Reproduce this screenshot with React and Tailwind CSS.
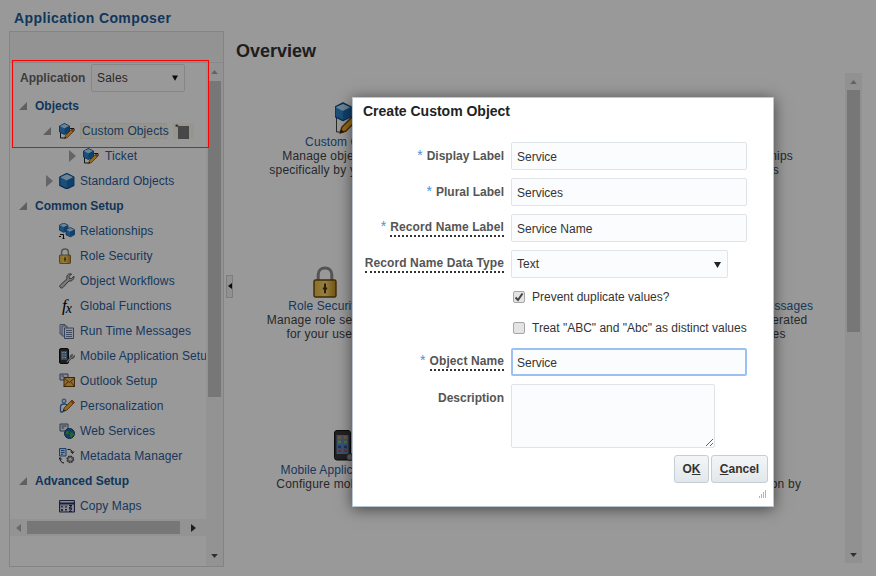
import React from 'react';

const Cube = ({ x = 0, y = 0, s = 1 }) => (
  <g transform={`translate(${x} ${y}) scale(${s})`}>
    <polygon points="5,0 10,2.5 10,8.5 5,11 0,8.5 0,2.5" fill="#2f86cc" stroke="#0b4f91" strokeWidth="0.9" strokeLinejoin="round" />
    <polygon points="5,0.6 9.6,2.6 5,5 0.4,2.6" fill="#b5dcf5" />
    <polygon points="5,5 9.6,2.6 9.6,8.2 5,10.5" fill="#1a6db5" />
  </g>
);

const Pencil = ({ x = 0, y = 0, s = 1 }) => (
  <g transform={`translate(${x} ${y}) scale(${s})`}>
    <polygon points="0,10 1,7 7.5,0.5 9.5,2.5 3,9" fill="#f0b429" stroke="#7a3f08" strokeWidth="0.7" strokeLinejoin="round" />
    <polygon points="7.5,0.5 9.5,2.5 8.3,3.7 6.3,1.7" fill="#d9541e" />
    <polygon points="0,10 0.6,8.2 1.8,9.4" fill="#222222" />
  </g>
);

const CubeEdit = () => (
  <svg width="16" height="16" viewBox="0 0 16 16">
    <path d="M1.500 9V15H5.500M11 5.500H15V8" fill="none" stroke="#222222" strokeWidth="1" />
    <Cube x={0.5} y={0.5} s={1} />
    <Pencil x={5.500} y={5.500} />
  </svg>
);

const StandardCube = () => (
  <svg width="16" height="16" viewBox="0 0 16 16">
    <Cube x={0.8} y={0.5} s={1.4} />
  </svg>
);

const Relationships = () => (
  <svg width="16" height="16" viewBox="0 0 16 16">
    <Cube x={0.5} y={0} s={0.85} />
    <Cube x={7} y={4.5} s={0.85} />
    <path d="M1 11.500H4.500V15M0 13.500H2M3.500 15.500H5.500" fill="none" stroke="#111111" strokeWidth="1" />
  </svg>
);

const LockIcon = ({ w = 12, h = 16 }) => (
  <svg width={w} height={h} viewBox="0 0 12 16">
    <defs>
      <linearGradient id="lockbody" x1="0" y1="0" x2="1" y2="0">
        <stop offset="0" stopColor="#e7b83a" />
        <stop offset="0.5" stopColor="#f8d873" />
        <stop offset="1" stopColor="#c08a1c" />
      </linearGradient>
    </defs>
    <path d="M2.600 7.500V4.400C2.600 2.300 4 1 6 1s3.400 1.300 3.400 3.400V7.500" fill="none" stroke="#8d8d8d" strokeWidth="1.500" />
    <rect x="0.500" y="7" width="11" height="8.500" rx="0.800" fill="url(#lockbody)" stroke="#6b4708" strokeWidth="0.700" />
    <path d="M6 8.800V13.600M4.900 11.200H7.100" stroke="#4d2f04" strokeWidth="1" />
  </svg>
);

const WrenchIcon = () => (
  <svg width="16" height="16" viewBox="0 0 16 16">
    <path d="M15 3.200 12.300 5.700 10.400 5.400 10 3.600 12.600 1C10.600.3 8.300 1.300 7.800 3.400c-.2.900-.1 1.700.2 2.400L1.400 11.900c-.8.800-.8 1.900-.1 2.600s1.800.7 2.600 0L10 7.900c2.500.7 5.300-1.300 5-4.700z" fill="#c8c8c8" stroke="#4a4a4a" strokeWidth="0.900" />
  </svg>
);

const DocsIcon = () => (
  <svg width="16" height="16" viewBox="0 0 16 16">
    <path d="M1 1.500H6V11H1z" fill="#e6ecf5" stroke="#6b7fa3" />
    <path d="M3 3H8V13H3z" fill="#e6ecf5" stroke="#6b7fa3" />
    <path d="M5.500 5H14.500V15.500H5.500z" fill="#f5f7fb" stroke="#5c6f94" />
    <path d="M7 7.500H13M7 9.500H13M7 11.500H13M7 13.500H13" stroke="#6b7fa3" />
  </svg>
);

const MobileSetup = () => (
  <svg width="16" height="16" viewBox="0 0 16 16">
    <rect x="0.500" y="0.500" width="9" height="15" rx="1.500" fill="#333333" stroke="#111111" />
    <rect x="2" y="3" width="6" height="9" fill="#5d7f9f" />
    <path d="M3 4.500H4.500M5.500 4.500H7M3 7H4.500M5.500 7H7M3 9.500H4.500M5.500 9.500H7" stroke="#d9dee5" strokeWidth="1.200" />
    <path d="M15.500 7.500 13.700 9 12.500 8.500 13.800 6.600C12.300 6.300 11 7.500 11.300 9L7.500 13.200C7 13.800 7.900 14.800 8.600 14.200L12.700 10.500C14.500 10.800 15.800 9.300 15.500 7.500z" fill="#bdbdbd" stroke="#333333" strokeWidth="0.600" />
  </svg>
);

const OutlookIcon = () => (
  <svg width="16" height="16" viewBox="0 0 16 16">
    <path d="M1 1H9V7H1z" fill="#dfe6f1" stroke="#4d5f80" />
    <path d="M2.500 3H5" stroke="#4d5f80" />
    <rect x="5" y="4.500" width="10.500" height="9" fill="#e9b65b" stroke="#6e4206" />
    <path d="M5 5 10.200 9.500 15.500 5M5 13.500 9 8.500M15.500 13.500 11.500 8.500" fill="none" stroke="#7d5010" />
  </svg>
);

const PersonEdit = () => (
  <svg width="16" height="16" viewBox="0 0 16 16">
    <circle cx="5" cy="3" r="2" fill="#dbe8f8" stroke="#3c6fb5" />
    <path d="M1.500 14V9C1.500 7 3 6 5 6s3 .8 3 2M1.500 14H4" fill="none" stroke="#3c6fb5" strokeWidth="1.300" />
    <Pencil x={4} y={1.500} s={1.200} />
  </svg>
);

const WebServices = () => (
  <svg width="16" height="16" viewBox="0 0 16 16">
    <path d="M1 1H9V8H1z" fill="#e4e9f2" stroke="#4d5f80" />
    <path d="M2.500 3H7.500M2.500 5H5" stroke="#4d5f80" />
    <circle cx="10.500" cy="10.500" r="5" fill="#1c6fae" stroke="#0c3f6c" />
    <path d="M8 7.500C9.500 8 10.500 9 9.500 10.500S7 11 6.500 11M11.500 9.500c1.500-.5 3 .5 3.500 2-1 1-2 3-3.500 3-.5-1.500-1-3 0-5z" fill="#4fa83d" />
  </svg>
);

const MetadataIcon = () => (
  <svg width="16" height="16" viewBox="0 0 16 16">
    <path d="M0.500 0.500H7V8H0.500z" fill="#dbe6f5" stroke="#2f6cb0" />
    <path d="M2 2.500H5.500M2 4.500H5.500M2 6.300H4" stroke="#2f6cb0" />
    <path d="M8.500 1.500C11 1 13 2 13.500 4.500M11.800 3.500 13.500 5.500 15 3.500M1 10.500C1 13 2.500 14.800 5 15M2.800 11.500 1 9.500-.2 11.500" fill="none" stroke="#111111" strokeWidth="1" />
    <circle cx="11.300" cy="11.300" r="3.200" fill="#9a9a9a" stroke="#444444" strokeWidth="1.400" strokeDasharray="1.500 1" />
    <circle cx="11.300" cy="11.300" r="1.200" fill="#eeeeee" />
  </svg>
);

const CopyMaps = () => (
  <svg width="16" height="16" viewBox="0 0 16 16">
    <rect x="0.500" y="2.500" width="15" height="11.500" rx="1" fill="#e4e7f2" stroke="#2a3560" strokeWidth="1.200" />
    <path d="M1 5.500H15" stroke="#2a3560" strokeWidth="2" />
    <path d="M2 7.500 4 9.500M4 7.500 2 9.500M6 7.500 7 8.500 8 7.500M7 8.500V10M10 7.500H13L10 10H13" fill="none" stroke="#111a40" strokeWidth="1" />
    <path d="M2 11 4 13M4 11 2 13M6 11 7 12 8 11M7 12V13.500M10 11H13L10 13.500H13" fill="none" stroke="#111a40" strokeWidth="0.800" />
  </svg>
);

const FxIcon = () => (
  <span className="flex w-[16px] h-[16px] items-center justify-center font-['Liberation_Serif',serif] italic text-[17px] text-black leading-none">
    f<span className="text-[14px] mt-[6px] -ml-[1px]">x</span>
  </span>
);

const Expanded = () => (
  <svg width="8" height="8" viewBox="0 0 8 8"><polygon points="8,0 8,8 0,8" fill="#a0a0a0" /></svg>
);

const Collapsed = () => (
  <svg width="8" height="12" viewBox="0 0 8 12"><polygon points="1,0 8,6 1,12" fill="#a8a8a8" /></svg>
);

const SectionRow = ({ title }) => (
  <div className="h-[25px] flex items-center pl-[9px]">
    <span className="w-[16px] flex shrink-0"><Expanded /></span>
    <span className="font-bold text-[#1c5a99]">{title}</span>
  </div>
);

const TreeLink = ({ icon, label }) => (
  <div className="h-[25px] flex items-center pl-[49px] whitespace-nowrap">
    <span className="w-[21px] flex shrink-0">{icon}</span>
    <span className="text-[#2c5d9a] tracking-[0.1px]">{label}</span>
  </div>
);

const setupItems = [
  [<Relationships />, 'Relationships'],
  [<LockIcon />, 'Role Security'],
  [<WrenchIcon />, 'Object Workflows'],
  [<FxIcon />, 'Global Functions'],
  [<DocsIcon />, 'Run Time Messages'],
  [<MobileSetup />, 'Mobile Application Setup'],
  [<OutlookIcon />, 'Outlook Setup'],
  [<PersonEdit />, 'Personalization'],
  [<WebServices />, 'Web Services'],
  [<MetadataIcon />, 'Metadata Manager'],
];

const ArrowUp = () => (
  <svg width="7" height="4" viewBox="0 0 10 6"><polygon points="5,0 10,6 0,6" fill="#a6a6a6" /></svg>
);

const ArrowDown = () => (
  <svg width="7" height="4" viewBox="0 0 10 6"><polygon points="0,0 10,0 5,6" fill="#505050" /></svg>
);

const Sidebar = () => (
  <div className="w-[215px] h-[536px] border border-[#dcdcdc] flex flex-col shrink-0">
    <div className="h-[31px] shrink-0 bg-[#f6f6f6] border-b border-[#e4e4e4]" />
    <div className="flex-1 flex min-h-0">
      <div className="w-[196px] flex flex-col">
        <div className="h-[30px] flex items-center pl-[10px]">
          <span className="w-[71px] font-bold text-[#666666]">Application</span>
          <div className="w-[94px] h-[28px] border border-[#e0e0e0] rounded-[2px] flex items-center justify-between pl-[5px] pr-[6px] text-[#444444] tracking-[0.2px]">
            Sales
            <svg width="6" height="6" viewBox="0 0 8 7"><polygon points="0,0 8,0 4,7" fill="#111111" /></svg>
          </div>
        </div>
        <div className="h-[426px] overflow-hidden">
          <SectionRow title="Objects" />
          <div className="h-[25px] flex items-center pl-[33px]">
            <span className="w-[16px] flex shrink-0"><Expanded /></span>
            <span className="w-[21px] flex shrink-0"><CubeEdit /></span>
            <span className="w-[87px] h-[16px] pl-[1px] mr-[6px] shrink-0 flex items-center bg-[#fbfbef] border border-[#f0f0dc] text-[#2c5d9a] tracking-[0.1px] whitespace-nowrap">Custom Objects</span>
            <span className="w-[21px] h-[16px] pl-[5px] shrink-0 bg-[#fbfbef] relative flex items-end">
              <span className="absolute left-[2px] top-0 text-[9px] leading-[9px] text-[#222222]">*</span>
              <span className="w-[11px] h-[13px] bg-[#777777]" />
            </span>
          </div>
          <div className="h-[25px] flex items-center pl-[58px]">
            <span className="w-[15px] flex shrink-0"><Collapsed /></span>
            <span className="w-[22px] flex shrink-0"><CubeEdit /></span>
            <span className="text-[#2c5d9a] tracking-[0.1px]">Ticket</span>
          </div>
          <div className="h-[25px] flex items-center pl-[35px]">
            <span className="w-[14px] flex shrink-0"><Collapsed /></span>
            <span className="w-[21px] flex shrink-0"><StandardCube /></span>
            <span className="text-[#2c5d9a] tracking-[0.1px]">Standard Objects</span>
          </div>
          <SectionRow title="Common Setup" />
          {setupItems.map(([icon, label]) => <TreeLink key={label} icon={icon} label={label} />)}
          <SectionRow title="Advanced Setup" />
          <TreeLink icon={<CopyMaps />} label="Copy Maps" />
        </div>
        <div className="h-[17px] bg-[#f5f5f5] flex items-center">
          <span className="w-[17px] flex justify-center">
            <svg width="5" height="8" viewBox="0 0 5 8"><polygon points="5,0 5,8 0,4" fill="#b0b0b0" /></svg>
          </span>
          <span className="w-[153px] h-[13px] bg-[#c6c6c6]" />
          <span className="flex-1 flex justify-center">
            <svg width="5" height="8" viewBox="0 0 5 8"><polygon points="0,0 5,4 0,8" fill="#333333" /></svg>
          </span>
        </div>
      </div>
      <div className="w-[17px] bg-[#f5f5f5] flex flex-col items-center">
        <div className="h-[18px] flex items-center"><ArrowUp /></div>
        <div className="w-[13px] h-[316px] bg-[#c6c6c6]" />
        <div className="flex-1" />
        <div className="h-[20px] flex items-center"><ArrowDown /></div>
      </div>
    </div>
  </div>
);

const Splitter = () => (
  <div className="w-[12px] h-[536px] shrink-0 flex items-center pl-[2px] pb-[26px]">
    <div className="w-[7px] h-[23px] border border-[#d0d0d0] bg-[#f2f2f2] flex items-center justify-center">
      <svg width="4" height="6" viewBox="0 0 4 6"><polygon points="4,0 4,6 0,3" fill="#111111" /></svg>
    </div>
  </div>
);

const OverviewCell = ({ className, icon, title, lines }) => (
  <div className={`${className} flex flex-col items-center text-center whitespace-nowrap`}>
    <div className="h-[33px] flex items-start justify-center">{icon}</div>
    <div className="text-[#2c5d9a] leading-[14px] tracking-[0.1px]">{title}</div>
    {lines.map((line) => <div key={line} className="text-[#444444] leading-[14px] tracking-[0.2px]">{line}</div>)}
  </div>
);

const BigCubeEdit = () => (
  <svg width="28" height="32" viewBox="0 0 28 32">
    <path d="M1.500 16V30H9M19 14H25V18" fill="none" stroke="#444444" strokeWidth="1" />
    <Cube x={0} y={1} s={1.600} />
    <Pencil x={5} y={11} s={2} />
  </svg>
);

const Phone = () => (
  <svg width="28" height="31" viewBox="0 0 28 31">
    <rect x="0.500" y="0.500" width="16" height="29.500" rx="2.500" fill="#383838" stroke="#111111" />
    <rect x="2.500" y="5" width="12" height="19" fill="#5c8cbe" />
    <path d="M4 7.500H7M10 7.500H13" stroke="#d88a5a" strokeWidth="2.500" />
    <path d="M4 12H7M10 12H13" stroke="#7ec06b" strokeWidth="2.500" />
    <path d="M4 17H7M10 17H13" stroke="#2f4f9b" strokeWidth="2.500" />
    <path d="M4 21H7M10 21H13" stroke="#c34a4a" strokeWidth="2" />
    <circle cx="16" cy="27" r="3.500" fill="#999999" stroke="#333333" />
  </svg>
);

const Overview = () => (
  <div className="flex-1 h-[536px] flex min-w-0">
    <div className="w-[609px]">
      <h1 className="mt-[10px] h-[20px] leading-[20px] text-[18px] font-bold text-[#333333]">Overview</h1>
      <div className="mt-[41px]">
        <div className="h-[164px] flex justify-between">
          <OverviewCell className="w-[225px]" icon={<BigCubeEdit />} title="Custom Objects" lines={['Manage objects created', 'specifically by your company']} />
          <OverviewCell className="w-[222px]" title="Relationships" lines={['Manage relationships', 'between objects']} />
        </div>
        <div className="h-[164px] flex justify-between">
          <OverviewCell className="w-[177px]" icon={<LockIcon w={24} h={32} />} title="Role Security" lines={['Manage role security', 'for your users']} />
          <OverviewCell className="w-[175px]" title="Run Time Messages" lines={['Review generated', 'messages']} />
        </div>
        <div className="h-[164px] flex justify-between">
          <OverviewCell className="w-[223px]" icon={<Phone />} title="Mobile Application Setup" lines={['Configure mobile features']} />
          <OverviewCell className="w-[220px]" title="Outlook Setup" lines={['Configure integration by']} />
        </div>
      </div>
    </div>
    <div className="w-[17px] h-[490px] mt-[42px] bg-[#f2f2f2] flex flex-col items-center">
      <div className="h-[17px] flex items-center"><ArrowUp /></div>
      <div className="w-[13px] h-[242px] bg-[#c6c6c6]" />
      <div className="flex-1" />
      <div className="h-[17px] flex items-center"><ArrowDown /></div>
    </div>
  </div>
);

const FieldLabel = ({ required, help, children }) => (
  <div className="w-[151px] flex justify-end items-start font-bold text-[#555555] whitespace-nowrap">
    {required && <span className="text-[#4a90e2] font-normal text-[14px] leading-[14px] mr-[4px] -mt-[1px]">*</span>}
    <span className={help ? 'border-b-2 border-dotted border-[#333333] leading-[15px] tracking-[0.1px]' : 'leading-[15px]'}>{children}</span>
  </div>
);

const inputClass = 'h-[28px] pt-[2px] rounded-[2px] bg-[#fbfcfe] text-[12px] text-[#333333] outline-none';

const TextField = ({ label, help, required, value, focus }) => (
  <div className="flex gap-[7px] items-center">
    <FieldLabel required={required} help={help}>{label}</FieldLabel>
    <input
      readOnly
      defaultValue={value}
      className={`${inputClass} w-[236px] ${focus ? 'pl-[4px] border-2 border-[#9cc0f2]' : 'pl-[5px] border border-[#dfe4e8]'}`}
    />
  </div>
);

const CheckRow = ({ checked, label, height }) => (
  <div className={`${height} flex items-center pl-[160px] gap-[7px] text-[#333333] whitespace-nowrap`}>
    <span className="w-[12px] h-[12px] rounded-[2px] border border-[#a6a6a6] bg-[#e4e4e4] flex items-center justify-center">
      {checked && (
        <svg width="10" height="10" viewBox="0 0 10 10"><path d="M1.500 5.500 4 8 8.500 1.500" fill="none" stroke="#444444" strokeWidth="2" /></svg>
      )}
    </span>
    {label}
  </div>
);

const ModalButton = ({ width, children }) => (
  <button className={`${width} h-[28px] rounded-[3px] border border-[#c4ced6] bg-gradient-to-b from-[#f3f6f8] to-[#e2e7eb] font-bold text-[#333333] text-[12px]`}>
    {children}
  </button>
);

const Modal = () => (
  <div className="absolute left-[352px] top-[97px] w-[422px] h-[410px] bg-white border border-[#bcc6d0] shadow-[0_2px_14px_rgba(0,0,0,0.55)] flex flex-col">
    <h2 className="mt-[4px] ml-[10px] h-[18px] leading-[18px] text-[14px] font-bold text-[#222222]">Create Custom Object</h2>
    <div className="mt-[22px] flex flex-col gap-[8px]">
      <TextField label="Display Label" required value="Service" />
      <TextField label="Plural Label" required value="Services" />
      <TextField label="Record Name Label" required help value="Service Name" />
      <div className="flex gap-[7px] items-center">
        <FieldLabel help>Record Name Data Type</FieldLabel>
        <div className="h-[28px] w-[217px] pl-[5px] pr-[6px] rounded-[2px] bg-[#fbfcfe] border border-[#dfe4e8] text-[#333333] flex items-center justify-between">
          Text
          <svg width="7" height="7" viewBox="0 0 7 7"><polygon points="0,1 7,1 3.500,7" fill="#222222" /></svg>
        </div>
      </div>
      <CheckRow height="h-[22px]" checked label="Prevent duplicate values?" />
      <CheckRow height="h-[24px]" label={'Treat "ABC" and "Abc" as distinct values'} />
      <TextField label="Object Name" required help value="Service" focus />
      <div className="flex gap-[7px] items-start">
        <div className="pt-[7px]"><FieldLabel>Description</FieldLabel></div>
        <textarea readOnly className="w-[204px] h-[64px] border border-[#dfe4e8] rounded-[2px] bg-[#fbfcfe] outline-none" />
      </div>
    </div>
    <div className="mt-[7px] pr-[5px] flex justify-end gap-[2px]">
      <ModalButton width="w-[35px]">O<span className="underline">K</span></ModalButton>
      <ModalButton width="w-[57px]"><span className="underline">C</span>ancel</ModalButton>
    </div>
    <div className="mt-[7px] pr-[6px] flex justify-end">
      <svg width="9" height="9" viewBox="0 0 9 9">
        <path d="M7.500 .5v1M5.500 2.500v1M7.500 2.500v1M3.500 4.500v1M5.500 4.500v1M7.500 4.500v1M1.500 6.500v1M3.500 6.500v1M5.500 6.500v1M7.500 6.500v1" stroke="#666666" />
      </svg>
    </div>
  </div>
);

export default function App() {
  return (
    <div className="relative w-full h-screen overflow-hidden bg-white font-['Liberation_Sans',Arial,sans-serif] text-[12px]">
      <div className="h-[31px] pl-[14px] pt-[9px] text-[14px] leading-[18px] font-bold text-[#1c5a99] tracking-[0.4px]">Application Composer</div>
      <div className="pl-[9px] flex">
        <Sidebar />
        <Splitter />
        <Overview />
      </div>
      <div className="absolute inset-0 bg-black/40" />
      <div className="absolute left-[12px] top-[60px] w-[197px] h-[88px] border border-[#ff0000]" />
      <Modal />
    </div>
  );
}
